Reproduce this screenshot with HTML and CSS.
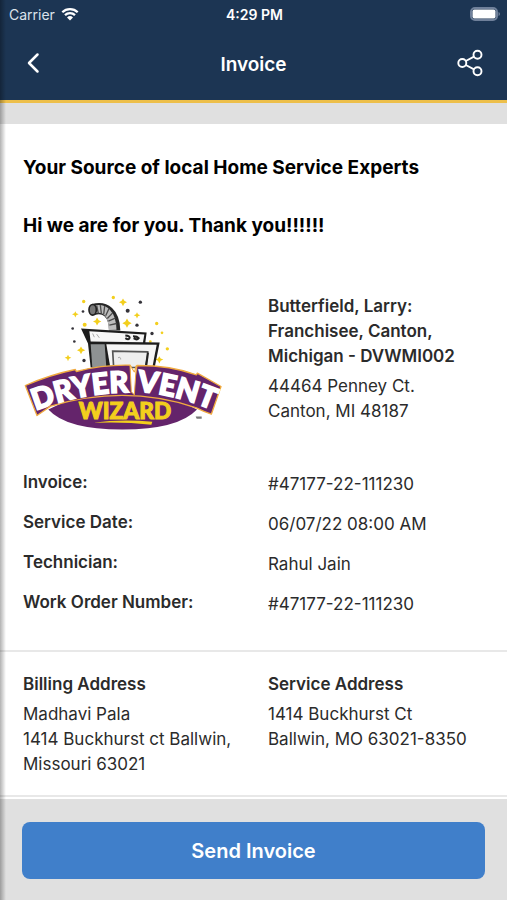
FILE: index.html
```html
<!DOCTYPE html>
<html lang="en">
<head>
    <meta charset="UTF-8">
    <meta name="viewport" content="width=device-width, initial-scale=1.0">
    <title>Invoice</title>
    <link rel="stylesheet" href="styles.css">
</head>
<body>

<div class="screen">
    <header class="header">
        <div class="status-bar">
            <div class="carrier">
                <span>Carrier</span>
                <svg class="wifi" viewBox="0 0 18 14" aria-hidden="true">
                    <path d="M1.300 5.200a11 11 0 0 1 15.400 0M4 8.200a7.200 7.200 0 0 1 10 0" fill="none" stroke="#fff" stroke-width="2.300"/>
                    <path d="M6 10.400a4.500 4.500 0 0 1 6 0L9 13.600z" fill="#fff"/>
                </svg>
            </div>
            <span class="time">4:29 PM</span>
            <svg class="battery" viewBox="0 0 30 14" aria-hidden="true">
                <rect x="1" y="1" width="26" height="12" rx="4" fill="none" stroke="#6f809a" stroke-width="2"/>
                <rect x="2.500" y="2.500" width="23" height="9" rx="2" fill="#fff"/>
                <path d="M28.500 5v4q1.500-.6 1.500-2t-1.500-2z" fill="#6f809a"/>
            </svg>
        </div>
        <nav class="nav-bar">
            <button class="icon-button" aria-label="Back">
                <svg width="14" height="22" viewBox="0 0 14 22"><path d="M11.500 2.500 3 11l8.500 8.500" fill="none" stroke="#fff" stroke-width="2.500" stroke-linecap="round" stroke-linejoin="round"/></svg>
            </button>
            <h1 class="nav-title">Invoice</h1>
            <button class="icon-button" aria-label="Share">
                <svg width="26" height="28" viewBox="0 0 26 28">
                    <g fill="none" stroke="#fff" stroke-width="1.900">
                        <circle cx="5.300" cy="14" r="4"/>
                        <circle cx="20.500" cy="5.700" r="4"/>
                        <circle cx="20.500" cy="22.300" r="4"/>
                        <path d="M8.800 12 17 7.600M8.800 16l8.200 4.400"/>
                    </g>
                </svg>
            </button>
        </nav>
    </header>

    <main class="content">
        <section class="section intro">
            <h2 class="message">Your Source of local Home Service Experts</h2>
            <h2 class="message">Hi we are for you. Thank you!!!!!!</h2>

            <div class="columns company">
                <svg class="logo" viewBox="40 40 600 410" role="img" aria-label="Dryer Vent Wizard">
                    <!-- sparkles -->
                    <g fill="#f3cf1d">
                        <path d="M340 53l4 7 8 4-8 4-4 8-4-8-8-4 8-4zM352 113l5 9 9 5-9 5-5 9-5-9-9-5 9-5zM262 110l5 8 8 4-8 4-5 8-4-8-8-4 8-4zM197 91l3 6 7 3-7 3-3 7-3-7-7-3 7-3zM214 197l4 7 9 4-9 4-4 8-4-8-8-4 8-4zM449 226l4 7 8 3-8 4-4 8-4-8-8-4 8-3zM382 94l3 6 7 3-7 3-3 7-3-7-7-3 7-3zM175 222l3 6 7 3-7 3-3 7-3-7-7-3 7-3z"/>
                        <circle cx="222" cy="62" r="5"/><circle cx="311" cy="50" r="5"/><circle cx="441" cy="128" r="5"/>
                        <circle cx="457" cy="156" r="4"/><circle cx="473" cy="204" r="5"/><circle cx="225" cy="132" r="6"/><circle cx="422" cy="182" r="4"/>
                    </g>
                    <g fill="#35333a">
                        <circle cx="392" cy="64" r="5"/><circle cx="354" cy="90" r="6"/><circle cx="220" cy="92" r="4"/>
                        <circle cx="382" cy="133" r="5"/><circle cx="427" cy="158" r="5"/><circle cx="189" cy="143" r="4"/>
                        <circle cx="194" cy="182" r="4"/><circle cx="223" cy="239" r="5"/>
                    </g>
                    <!-- hose -->
                    <path d="M251 86C286 76 314 96 315 149" fill="none" stroke="#272727" stroke-width="34"/>
                    <path d="M253 86C286 78 308 98 309 147" fill="none" stroke="#bdbdbd" stroke-width="23"/>
                    <path d="M261 74l5 24M272 73l3 25M285 76l-3 25M298 83l-10 22M309 96l-16 17M317 112l-21 9M321 128l-22 5" stroke="#4b4b4b" stroke-width="4"/>
                    <ellipse cx="249" cy="87" rx="11" ry="16" fill="#777" stroke="#222" stroke-width="5"/>
                    <!-- dryer -->
                    <path d="M214 143l197 12-4 29 43 1-15 75H243l-8-72z" fill="#1d1d1d"/>
                    <path d="M239 151l165 10-4 23-157-2z" fill="#f7f7f7"/>
                    <path d="M243 190h42l5 70h-42z" fill="#8e9293"/>
                    <path d="M290 190l151 2-13 68H302z" fill="#f6f6f6"/>
                    <path d="M309 211l105 2-6 47H312z" fill="#eee" stroke="#555" stroke-width="5"/>
                    <path d="M413 214l5 2-6 44h-7z" fill="#222"/>
                    <path d="M249 158l5 11M261 160l8 11M325 231q8-5 8 5" fill="none" stroke="#aaa" stroke-width="3"/>
                    <path d="M347 164q13 1 13 7-2 8-13 1M370 166q13 0 17 6-5 7-15 0" fill="none" stroke="#222" stroke-width="6"/>
                    <!-- purple banner -->
                    <path d="M116 386Q170 446 338 446 505 446 562 386L500 355Q340 325 178 357z" fill="#64246b"/>
                    <path d="M47 314Q120 282 197 266l3 6Q281 251 361 253l16 30 5-29Q485 254 560 282l3-5 71 40-29 83q-23-8-45-19Q349 309 123 376l-41 28z" fill="#64246b" stroke="#f1aa3f" stroke-width="4" stroke-linejoin="round"/>
                    <path d="M361 253l4 80 9 9 6-88-6 20z" fill="#fff" stroke="#f1aa3f" stroke-width="3"/>
                    <path id="name-arc" d="M78 390Q220 334 362 335" fill="none"/>
                    <path id="vent-arc" d="M382 332Q500 340 622 394" fill="none"/>
                    <g class="logo-name">
                        <text><textPath href="#name-arc">DRYER</textPath></text>
                        <text><textPath href="#vent-arc">VENT</textPath></text>
                    </g>
                    <text class="logo-wizard" x="346" y="415">WIZARD</text>
                    <path d="M251 426q85-13 177-3l-3 9q-83-10-174-6z" fill="#f3cf1d"/>
                    <path d="M558 407h18v7h-15z" fill="#777"/>
                </svg>
                <div>
                    <h3 class="label">Butterfield, Larry: Franchisee, Canton, Michigan - DVWMI002</h3>
                    <p class="text">44464 Penney Ct.<br>Canton, MI 48187</p>
                </div>
            </div>

            <dl class="details">
                <div class="columns"><dt>Invoice:</dt><dd>#47177-22-111230</dd></div>
                <div class="columns"><dt>Service Date:</dt><dd>06/07/22 08:00 AM</dd></div>
                <div class="columns"><dt>Technician:</dt><dd>Rahul Jain</dd></div>
                <div class="columns"><dt>Work Order Number:</dt><dd>#47177-22-111230</dd></div>
            </dl>
        </section>

        <section class="section columns addresses">
            <div>
                <h3 class="label">Billing Address</h3>
                <p class="text">Madhavi Pala<br>1414 Buckhurst ct Ballwin,<br>Missouri 63021</p>
            </div>
            <div>
                <h3 class="label">Service Address</h3>
                <p class="text">1414 Buckhurst Ct<br>Ballwin, MO 63021-8350</p>
            </div>
        </section>
    </main>

    <footer class="footer">
        <button class="send-button">Send Invoice</button>
    </footer>
</div>

</body>
</html>
```
FILE: styles.css
```css
* {
    box-sizing: border-box;
}
body {
    margin: 0;
    font-family: Inter, "Liberation Sans", sans-serif;
    font-size: 17px;
    line-height: 25px;
    color: #2b2b2b;
    background-color: #e0e0e0;
}
h1, h2, h3, p, dl, dd {
    margin: 0;
}
button {
    font-family: inherit;
    border: none;
    cursor: pointer;
}
.screen {
    position: relative;
    display: flex;
    flex-direction: column;
    min-height: 100vh;
}
/* shadow along the left edge of the screen */
.screen::after {
    content: "";
    position: absolute;
    top: 0;
    bottom: 0;
    left: 0;
    width: 6px;
    background: linear-gradient(to right, rgba(0, 0, 0, 0.3), rgba(0, 0, 0, 0));
    pointer-events: none;
}
.header {
    background-color: #1c3553;
    color: #fff;
    border-bottom: 3px solid #edbf4a;
}
.status-bar {
    display: grid;
    grid-template-columns: 1fr auto 1fr;
    align-items: center;
    height: 28px;
    padding: 0 7px 0 9px;
    font-size: 14px;
}
.carrier {
    display: flex;
    align-items: center;
    gap: 6px;
    color: #dbe2eb;
}
.wifi {
    width: 18px;
    height: 14px;
}
.time {
    font-weight: 600;
}
.battery {
    width: 30px;
    height: 14px;
    justify-self: end;
}
.nav-bar {
    display: flex;
    align-items: center;
    justify-content: space-between;
    height: 72px;
    padding: 0 18px;
}
.icon-button {
    display: flex;
    align-items: center;
    justify-content: center;
    width: 38px;
    height: 44px;
    padding: 0;
    margin-bottom: 2px;
    background: none;
}
.icon-button:first-child {
    width: 30px;
    margin-right: 8px;
}
.nav-title {
    font-size: 19px;
    font-weight: 600;
}
.content {
    flex: 1;
    margin-top: 21px;
    background-color: #fff;
}
.section {
    padding: 0 22px 0 23px;
    border-bottom: 2px solid #e8e8e8;
}
.columns {
    display: grid;
    grid-template-columns: 1fr 1fr;
    gap: 28px;
}
.intro {
    padding-top: 31px;
    padding-bottom: 33px;
}
.message {
    margin-bottom: 33px;
    font-size: 19px;
    font-weight: 700;
    color: #000;
}
.company {
    margin-top: 56px;
    align-items: start;
}
.logo {
    width: 200px;
    height: 137px;
}
.logo-name {
    font-family: Lato, sans-serif;
    font-size: 88px;
    font-weight: 900;
    fill: #fff;
    stroke: #fff;
    stroke-width: 5px;
}
.logo-wizard {
    font-family: Lato, sans-serif;
    font-size: 68px;
    font-weight: 900;
    text-anchor: middle;
    fill: #f3cf1d;
    stroke: #f3cf1d;
    stroke-width: 3px;
}
.label {
    margin-bottom: 5px;
    font-size: 17px;
    font-weight: 600;
}
.details {
    display: flex;
    flex-direction: column;
    gap: 13px;
    margin-top: 39px;
}
.details dt {
    font-weight: 600;
}
.details dd {
    padding-top: 2px;
}
.addresses {
    padding-top: 20px;
    padding-bottom: 18px;
}
.footer {
    padding: 23px 22px 21px;
    background-color: #e0e0e0;
}
.send-button {
    display: block;
    width: 100%;
    height: 57px;
    font-size: 20px;
    font-weight: 600;
    color: #fff;
    background-color: #407fca;
    border-radius: 8px;
}
.send-button:hover {
    background-color: #3874bb;
}
```
